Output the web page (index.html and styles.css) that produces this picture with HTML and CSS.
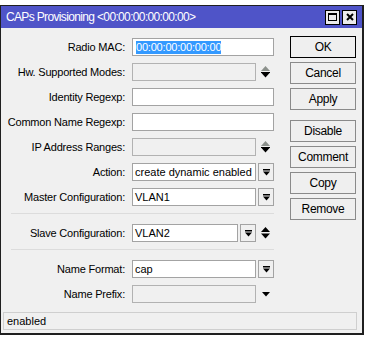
FILE: index.html
```html
<!DOCTYPE html>
<html>
<head>
<meta charset="utf-8">
<title>CAPs Provisioning</title>
<link rel="stylesheet" href="styles.css">
</head>
<body>
<div class="window">
  <div class="titlebar">
    <span class="title">CAPs Provisioning &lt;00:00:00:00:00:00&gt;</span>
    <span class="tbtn"><svg width="9" height="8" viewBox="0 0 9 8"><rect x="0.5" y="0.5" width="8" height="7" fill="none" stroke="#000"/><rect x="0" y="0" width="9" height="2" fill="#000"/></svg></span>
    <span class="tbtn"><svg width="8" height="8" viewBox="0 0 8 8"><path d="M1 1L7 7M7 1L1 7" stroke="#000" stroke-width="2"/></svg></span>
  </div>
  <div class="main">
    <div class="form">
      <div class="row"><span class="lbl">Radio MAC:</span><div class="field full"><span class="sel">00:00:00:00:00:00</span></div></div>
      <div class="row"><span class="lbl">Hw. Supported Modes:</span><div class="field short off"></div><svg class="spin" width="9" height="12" viewBox="0 0 9 12"><path d="M0 5H9L4.5 0Z" fill="#8c918c"/><rect x="0" y="6" width="9" height="1" fill="#000"/><path d="M0.5 7H8.5L4.5 11.5Z" fill="#000"/></svg></div>
      <div class="row"><span class="lbl">Identity Regexp:</span><div class="field full"></div></div>
      <div class="row"><span class="lbl">Common Name Regexp:</span><div class="field full"></div></div>
      <div class="row"><span class="lbl">IP Address Ranges:</span><div class="field short off"></div><svg class="spin" width="9" height="12" viewBox="0 0 9 12"><path d="M0 5H9L4.5 0Z" fill="#8c918c"/><rect x="0" y="6" width="9" height="1" fill="#000"/><path d="M0.5 7H8.5L4.5 11.5Z" fill="#000"/></svg></div>
      <div class="row"><span class="lbl">Action:</span><div class="field short">create dynamic enabled</div><span class="dd"><svg width="7" height="7" viewBox="0 0 7 7"><rect x="0" y="0" width="7" height="1.5" fill="#000"/><path d="M0 2.5H7L3.5 6.5Z" fill="#000"/></svg></span></div>
      <div class="row"><span class="lbl">Master Configuration:</span><div class="field short">VLAN1</div><span class="dd"><svg width="7" height="7" viewBox="0 0 7 7"><rect x="0" y="0" width="7" height="1.5" fill="#000"/><path d="M0 2.5H7L3.5 6.5Z" fill="#000"/></svg></span></div>
      <div class="sep sep1"></div>
      <div class="row"><span class="lbl">Slave Configuration:</span><div class="field mid">VLAN2</div><span class="dd"><svg width="7" height="7" viewBox="0 0 7 7"><rect x="0" y="0" width="7" height="1.5" fill="#000"/><path d="M0 2.5H7L3.5 6.5Z" fill="#000"/></svg></span><svg class="spin" width="9" height="12" viewBox="0 0 9 12"><path d="M0 5H9L4.5 0Z" fill="#000"/><path d="M0 6.5H9L4.5 11.5Z" fill="#000"/></svg></div>
      <div class="sep sep2"></div>
      <div class="row"><span class="lbl">Name Format:</span><div class="field short">cap</div><span class="dd"><svg width="7" height="7" viewBox="0 0 7 7"><rect x="0" y="0" width="7" height="1.5" fill="#000"/><path d="M0 2.5H7L3.5 6.5Z" fill="#000"/></svg></span></div>
      <div class="row last"><span class="lbl">Name Prefix:</span><div class="field short off"></div><svg class="arrow" width="8" height="5" viewBox="0 0 8 5"><path d="M0 0H8L4 4.5Z" fill="#000"/></svg></div>
    </div>
    <div class="buttons">
      <span class="btn default">OK</span>
      <span class="btn">Cancel</span>
      <span class="btn">Apply</span>
      <span class="btn gap">Disable</span>
      <span class="btn">Comment</span>
      <span class="btn">Copy</span>
      <span class="btn">Remove</span>
    </div>
  </div>
  <div class="status">enabled</div>
</div>
</body>
</html>
```

FILE: styles.css
```css
* { box-sizing: border-box; }
body {
  margin: 0;
  background: #fff;
  font-family: "Liberation Sans", Arial, sans-serif;
  font-size: 11px;
  color: #000;
}
.window {
  width: 364px;
  margin-top: 5px;
  border: 1px solid #1f1f1f;
  border-right-width: 2px;
  border-bottom-width: 2px;
  background: #f0f0f0;
  padding-bottom: 3px;
}
.titlebar {
  height: 22px;
  background: #4f54c8;
  display: flex;
  align-items: center;
  padding: 0 5px 0 5px;
  color: #fff;
}
.title {
  flex: 1;
  font-size: 12px;
  letter-spacing: -0.65px;
}
.tbtn {
  width: 15px;
  height: 15px;
  margin-left: 2px;
  border: 1px solid #000;
  background: #ececec;
  display: flex;
  align-items: center;
  justify-content: center;
}
.main {
  display: flex;
  padding-top: 8px;
}
.form {
  width: 273px;
  padding-top: 2px;
}
.row {
  display: flex;
  align-items: center;
  height: 18px;
  margin-bottom: 7px;
}
.row.last { margin-bottom: 9px; }
.lbl {
  width: 124px;
  margin-right: 7px;
  text-align: right;
  letter-spacing: -0.2px;
  white-space: nowrap;
}
.field {
  height: 18px;
  border: 1px solid #a3a3a3;
  background: #fff;
  padding-left: 2px;
  display: flex;
  align-items: center;
  white-space: nowrap;
  overflow: hidden;
}
.field.full { width: 142px; }
.field.short { width: 124px; }
.field.mid { width: 106px; }
.field.off { background: #f0f0f0; border-color: #b2b2b2; }
.sel {
  background: #3399ff;
  color: #fff;
  margin-left: 1px;
  line-height: 13px;
  letter-spacing: -0.2px;
}
.dd {
  width: 16px;
  height: 18px;
  margin-left: 2px;
  border: 1px solid #a3a3a3;
  background: #f0f0f0;
  display: flex;
  align-items: center;
  justify-content: center;
}
.spin { margin-left: 5px; }
.arrow { margin-left: 6px; }
.sep {
  height: 1px;
  margin-left: 10px;
  background: #dcdcdc;
}
.sep1 { margin-top: 3px; margin-bottom: 10px; }
.sep2 { margin-top: 3px; margin-bottom: 10px; }
.buttons {
  margin-left: 16px;
  width: 66px;
  display: flex;
  flex-direction: column;
}
.btn {
  height: 22px;
  margin-bottom: 4px;
  border: 1px solid #8a8a8a;
  background: #efefef;
  display: flex;
  align-items: center;
  justify-content: center;
  font-size: 12px;
  letter-spacing: -0.3px;
}
.btn.default { border-color: #000; }
.btn.gap { margin-top: 6px; }
.status {
  margin: 0 5px 0 2px;
  height: 18px;
  border: 1px solid #cfcfcf;
  padding-left: 3px;
  display: flex;
  align-items: center;
}
```
